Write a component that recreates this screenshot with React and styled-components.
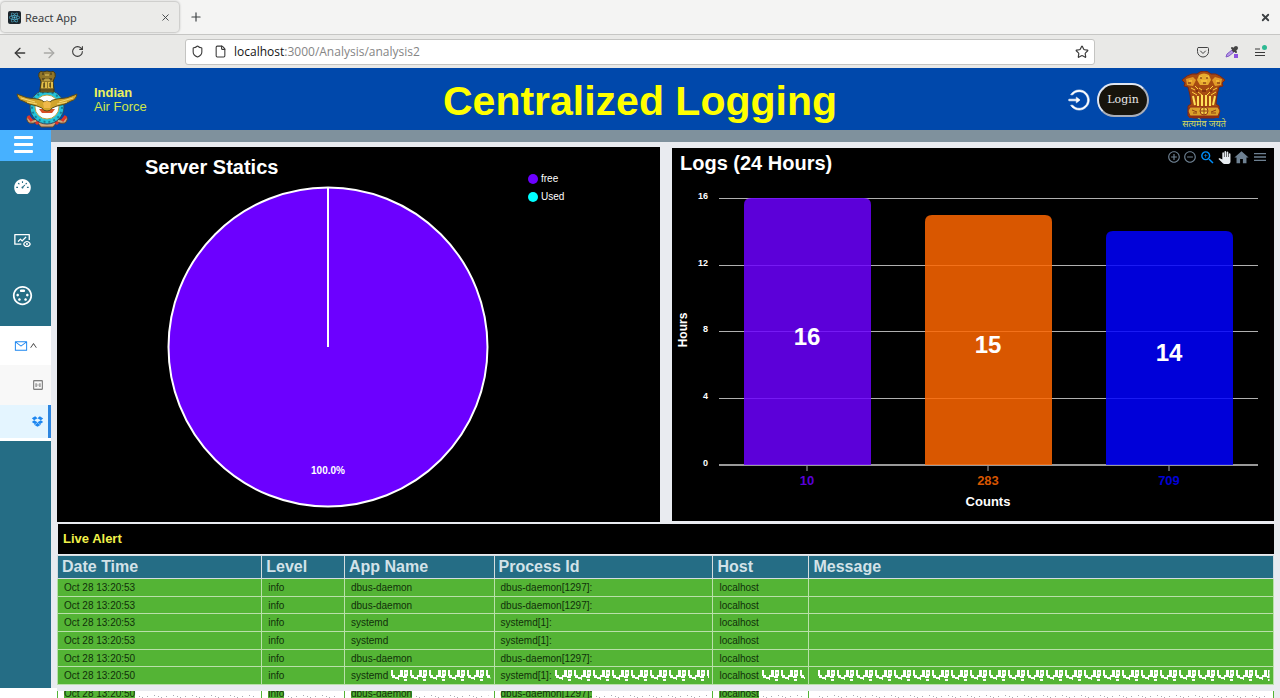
import React from "react";
import styled, { createGlobalStyle, css } from "styled-components";
import {
  ArrowLeft,
  ArrowRight,
  RotateCw,
  Shield,
  File,
  Star,
  X,
  Plus,
} from "lucide-react";
import { FaReact } from "react-icons/fa";
import {
  AiFillDashboard,
  AiOutlineFundView,
  AiOutlineMail,
  AiOutlineUp,
  AiOutlineOneToOne,
  AiOutlineDropbox,
  AiOutlineLogin,
} from "react-icons/ai";
import {
  MdOutlineSettingsInputSvideo,
  MdAddCircleOutline,
  MdRemoveCircleOutline,
  MdZoomIn,
  MdPanTool,
  MdHome,
  MdMenu,
} from "react-icons/md";

const GlobalStyle = createGlobalStyle`
  * { box-sizing: border-box; }
  body {
    margin: 0;
    overflow: hidden;
    background: #e9ebf0;
    font-family: "Liberation Sans", Arial, sans-serif;
  }
  button { border: 0; padding: 0; background: none; font: inherit; color: inherit; cursor: pointer; }
  h1, h2, ul { margin: 0; padding: 0; list-style: none; }
  a { color: inherit; text-decoration: none; }
  svg { display: block; flex: none; }
`;

const Screen = styled.div`
  display: flex;
  flex-direction: column;
  height: 100vh;
  overflow: hidden;
`;

/* Browser window */
const TabBar = styled.div`
  flex: none;
  display: flex;
  align-items: center;
  height: 35px;
  padding: 0 9px 0 1px;
  background: #f4f4f3;
  border-bottom: 1px solid #c6c6c4;
  font-family: "Noto Sans", sans-serif;
  font-size: 11px;
  color: #3c4043;
`;

const Tab = styled.div`
  display: flex;
  align-items: center;
  gap: 4px;
  width: 178px;
  height: 30px;
  padding: 0 8px 0 7px;
  margin-right: 10px;
  background: #ebebe9;
  border-radius: 4px;
  box-shadow: 0 0 2px 1px #c2c2c0;
`;

const TabTitle = styled.span`
  flex: 1;
`;

const Favicon = styled.span`
  display: grid;
  place-items: center;
  width: 13px;
  height: 13px;
  border-radius: 2px;
  background: #1c252c;
  color: #5ac8e8;
`;

const Push = styled.span`
  flex: 1;
`;

const NavBar = styled.div`
  flex: none;
  display: flex;
  align-items: center;
  height: 33px;
  padding: 0 12px;
  background: #e9e9e7;
  color: #3a3a3a;
`;

const NavButton = styled.button`
  display: grid;
  place-items: center;
  width: 14px;
  height: 14px;
  color: ${(p) => (p.$faded ? "#a9a9a7" : "inherit")};
`;

const NavGroup = styled.div`
  display: flex;
  gap: 15px;
`;

const AddressBar = styled.div`
  display: flex;
  align-items: center;
  gap: 10px;
  flex: 1;
  height: 26px;
  margin: 0 101px;
  padding: 0 5px;
  background: #fff;
  border: 1px solid #c4c4c2;
  border-radius: 3px;
  font: 12px "Open Sans", sans-serif;
`;

const Address = styled.span`
  flex: 1;
  margin-left: -3px;
  color: #858585;
`;

const AddressHost = styled.span`
  color: #141414;
`;

/* Site banner */
const Banner = styled.header`
  flex: none;
  display: grid;
  grid-template-columns: 1fr auto 1fr;
  align-items: center;
  height: 62px;
  background: #0048ab;
`;

const Brand = styled.div`
  display: flex;
  align-items: center;
  gap: 16px;
  padding-left: 16px;
  font-size: 13px;
  line-height: 14px;
  color: #cfe64a;
`;

const BrandName = styled.div`
  color: ${(p) => (p.$strong ? "#ecf05c" : "inherit")};
  font-weight: ${(p) => (p.$strong ? 700 : 400)};
`;

const Title = styled.h1`
  padding-top: 2px;
  font-size: 41px;
  line-height: 46px;
  color: #ffff00;
`;

const Account = styled.div`
  display: flex;
  align-items: center;
  justify-content: flex-end;
  padding-right: 53px;
  color: #fff;
`;

const LoginIcon = styled(AiOutlineLogin)`
  stroke: currentColor;
  stroke-width: 24px;
`;

const LoginButton = styled.button`
  width: 52px;
  height: 34px;
  margin: 0 32px 0 6px;
  border: 2px solid #a9aeb8;
  border-top-color: #dfe6f2;
  border-left-color: #dfe6f2;
  border-radius: 17px;
  background: #17140c;
  font: 11px "DejaVu Serif", serif;
  color: #e8e8e8;
`;

const Emblem = styled.div`
  display: grid;
  justify-items: center;
  padding-top: 3px;
`;

const Motto = styled.div`
  font: 9px/12px "Noto Sans Devanagari", "Noto Sans", sans-serif;
  color: #d8dc5a;
  white-space: nowrap;
`;

/* Side menu */
const Body = styled.div`
  flex: 1;
  min-height: 0;
  display: flex;
`;

const Sidebar = styled.nav`
  flex: none;
  display: flex;
  flex-direction: column;
  width: 51px;
  background: #256d85;
  color: #fff;
`;

const MenuToggle = styled.button`
  display: grid;
  align-content: center;
  gap: 4px;
  height: 31px;
  padding: 0 18px 2px 14px;
  background: #47b1ff;
`;

const Bar = styled.span`
  height: 3px;
  border-radius: 1px;
  background: #fff;
`;

const SideLinks = styled.div`
  display: flex;
  flex-direction: column;
  align-items: center;
  gap: 35px;
  height: 165px;
  padding: 16px 7px 0 0;
`;

const SubMenu = styled.div`
  padding-bottom: 3px;
  background: #fff;
`;

const subItem = css`
  display: flex;
  align-items: center;
  width: 100%;
`;

const SubHeading = styled.button`
  ${subItem}
  height: 39px;
  padding-left: 14px;
  gap: 1px;
  color: #1d86f0;
`;

const SubLink = styled.a`
  ${subItem}
  justify-content: flex-end;
  height: ${(p) => (p.$active ? "33px" : "40px")};
  padding-right: ${(p) => (p.$active ? "4px" : "7px")};
  background: ${(p) => (p.$active ? "#e4f5ff" : "#f8f8f8")};
  color: ${(p) => (p.$active ? "#1d86f0" : "#555")};
  border-right: ${(p) => (p.$active ? "3px solid #2d86e0" : "0")};
`;

const SidebarEdge = styled.div`
  height: 10px;
  margin: auto -6px 0 0;
  background: #fff;
`;

/* Content */
const Content = styled.main`
  flex: 1;
  min-width: 0;
`;

const Strip = styled.div`
  height: 12px;
  background: #7f919d;
`;

const Dashboard = styled.div`
  padding: 5px 6px 0;
`;

const Charts = styled.div`
  display: grid;
  grid-template-columns: 603fr 602fr;
  gap: 12px;
`;

const Panel = styled.section`
  display: ${(p) => (p.$row ? "flex" : "block")};
  margin: ${(p) => (p.$row ? "0" : "1px 0")};
  background: #000;
  color: #fff;
`;

const PanelTitle = styled.h2`
  font-size: 20px;
  line-height: 24px;
`;

const PieArea = styled.div`
  padding: 8px 0 14px 88px;
  svg { margin: 7px 0 0 22px; }
`;

const Legend = styled.ul`
  padding: 23px 0 0 39px;
  font-size: 10px;
  line-height: 18px;
`;

const LegendItem = styled.li`
  display: flex;
  align-items: center;
  gap: 3px;
  &::before {
    content: "";
    width: 10px;
    height: 10px;
    border-radius: 50%;
    background: ${(p) => p.$color};
  }
`;

const PanelHeader = styled.div`
  display: flex;
  justify-content: space-between;
  height: 30px;
  padding: 3px 6px 0 8px;
`;

const Tools = styled.div`
  display: flex;
  align-items: center;
  gap: 2px;
  height: 12px;
  color: #6e8192;
`;

const Tool = styled.button`
  color: ${(p) => p.$color || "inherit"};
`;

const ChartSvg = styled.svg`
  width: 100%;
  height: auto;
  font-family: "Liberation Sans", Arial, sans-serif;
  font-weight: 700;
`;

const AlertTitle = styled.h2`
  margin: 2px 0 1px 1px;
  padding-left: 5px;
  background: #000;
  font-size: 13px;
  line-height: 30px;
  color: #f0f04a;
`;

const LogTable = styled.table`
  width: 100%;
  border-collapse: collapse;
  table-layout: fixed;
`;

const HeadCell = styled.th`
  height: 23px;
  padding: 0 4px;
  background: #256d85;
  border: 1px solid #d5dde0;
  font-size: 16px;
  line-height: 20px;
  text-align: left;
  color: #d3e2e8;
`;

const LogRow = styled.tr`
  height: 18px;
  &:nth-child(3n + 2) { height: 17px; }
`;

const Cell = styled.td`
  position: relative;
  padding: 0 0 0 6px;
  background: #54b435;
  border: 1px solid #b9e0aa;
  font-size: 10px;
  line-height: 15px;
  color: #10300a;

  ${(p) =>
    p.$clipped &&
    css`
      background: #fff;
      border-color: #54b435;
      padding-right: 2px;
      &::before {
        content: "";
        position: absolute;
        inset: 0 -1px auto;
        height: 6px;
        background: #e9ebf0;
      }
    `}
`;

const CellLine = styled.span`
  display: flex;
  align-items: center;
`;

const CellText = styled.span`
  background: #54b435;
`;

const Texture = styled.svg`
  flex: 1;
  min-width: 0;
  width: 0;
  height: ${(p) => (p.$faint ? 14 : 12)}px;
  margin: 0 3px 0 2px;
`;

function Speckle({ id }) {
  return (
    <Texture aria-hidden="true">
      <pattern id={id} width="19" height="12" patternUnits="userSpaceOnUse">
        <path
          d="M1 0h2v5h2v3H2V6H1zM5 7h3v2H5zM8 5h2V0h3v7H9v3H8zM14 0h4v6h-1v2h-4V6h1zM14 9h3v2h-3z"
          fill="#fff"
        />
        <path d="M15 2h2v2h-2z" fill="#b7ddaa" />
      </pattern>
      <rect width="100%" height="12" fill={`url(#${id})`} />
    </Texture>
  );
}

function Dots({ id }) {
  return (
    <Texture $faint aria-hidden="true">
      <pattern id={id} width="19" height="14" patternUnits="userSpaceOnUse">
        <path
          d="M2 9h1v1H2zM7 12h1v1H7zM10 9h1v1h-1zM13 11h1v1h-1zM17 8h1v1h-1zM5 10h1v1H5z"
          fill="#a9a9b2"
        />
      </pattern>
      <rect width="100%" height="14" fill={`url(#${id})`} />
    </Texture>
  );
}

function AirForceCrest() {
  return (
    <svg width="62" height="60" viewBox="0 0 62 60" role="img" aria-label="Indian Air Force crest">
      <path
        d="M12 46q-3 3 1 7 4 1 8-1l4 5h12l4-5q4 2 8 1 4-4 1-7l-4 4-7-1H23l-7 1z"
        fill="#cfa77c"
        stroke="#61442b"
      />
      <path d="M12 46l4 5M50 46l-4 5M20 54l3-3M42 54l-3-3" stroke="#e0342a" strokeWidth="3" />
      <circle cx="31" cy="37" r="17" fill="#25c3d8" stroke="#35435b" />
      <circle cx="31" cy="37" r="15" fill="none" stroke="#16809a" strokeWidth="2" strokeDasharray="2 3" />
      <circle cx="31" cy="37" r="12" fill="#fff" stroke="#b8a344" />
      <path d="M23 39h16l-3 4H26z" fill="#d94f24" />
      <path
        d="M1 24q10 5 20 5 6 1 7 3l3-1 3 1q1-2 7-3 10 0 20-5-1 6-6 7l-6 3-8 2-5 2q-1 3-5 3t-5-3l-5-2-8-2-6-3q-5-1-6-7z"
        fill="#d2a52c"
        stroke="#5c4c17"
      />
      <path d="M5 28l14 4M57 28l-14 4M11 32l10 2M51 32l-10 2" stroke="#f4d774" />
      <path d="M27 33q4-4 8 0l-1 5h-6z" fill="#f0b94a" />
      <path
        d="M23 3q2-3 4-1 4-2 8 0 2-2 4 1 1 4-1 6l-1 3 1 7v3H24v-3l1-7-1-3q-2-2-1-6z"
        fill="#907528"
        stroke="#433814"
      />
      <path d="M27 12l-1 6M30 12v6M33 12v6M36 12v6" stroke="#e0bd48" strokeWidth="2" />
      <path d="M24 20h14M26 4h2M34 4h2M26 9h3M33 9h3M28 13v4M34 13v4" stroke="#332c16" />
      <path d="M29 5h4M28 10h6" stroke="#e7ca62" />
    </svg>
  );
}

function LionCapital() {
  return (
    <svg width="46" height="48" viewBox="0 0 46 48" role="img" aria-label="State emblem">
      <path
        d="M16 3q3-3 7-3t7 3q5-1 9 2l5 4-3 3 1 3-4 1-2 8-1 9 3 2v10l-5 2H12l-5-2V35l3-2-1-9-2-8-4-1 1-3-3-3 5-4q5-3 10-2z"
        fill="#a64b12"
        stroke="#7d2612"
      />
      <path d="M18 4q5-3 10 0l2 5-3 5h-8l-3-5z" fill="#e8ac30" />
      <path d="M5 8l7-2 3 3-3 6-6-1M41 8l-7-2-3 3 3 6 6-1" fill="#e39a28" />
      <path
        d="M10 17l4 2M14 15l3 3M18 17l3 2M25 19l3-2M29 18l3-3M32 19l4-2M11 21l5 3M17 21l4 3M26 24l3-3M30 24l5-3M18 6h3M25 6h3M20 10h6M8 10h3M35 10h3"
        stroke="#ffd040"
      />
      <path d="M12 25l2 9M17 25v10M21 24v11M25 24v11M29 25v10M34 25l-2 9" stroke="#ffe25a" strokeWidth="2" />
      <path d="M9 36h28l2 4-2 5H9l-2-5z" fill="#dba12a" stroke="#8d2c14" />
      <circle cx="23" cy="40" r="4" fill="#f3cf49" stroke="#963817" />
      <path d="M23 36v8M19 40h8M11 39l5 2M12 42h4M30 41l5-2M30 42h5" stroke="#8c3e13" />
      <path d="M8 46h30" stroke="#8d2c14" strokeWidth="2" />
      <path d="M19 7h2M25 7h2M22 12h3M15 20h2M29 20h2M21 20h4M7 12h3M36 12h3" stroke="#641b0d" />
    </svg>
  );
}

const bars = [
  { label: "10", value: 16, color: "#6c00ff", x: 72 },
  { label: "283", value: 15, color: "#ff6600", x: 253 },
  { label: "709", value: 14, color: "#0000ff", x: 434 },
];
const BASE = 287;
const TOP = 20;
const yOf = (v) => BASE - Math.round(((BASE - TOP) * v) / 16);

function BarChart() {
  return (
    <ChartSvg viewBox="0 0 602 343" role="img" aria-label="Logs per count">
      {[16, 12, 8, 4, 0].map((v) => (
        <g key={v}>
          <line
            x1="47"
            x2="586"
            y1={yOf(v)}
            y2={yOf(v)}
            stroke={v ? "#b0b0b0" : "#999"}
            strokeWidth={v ? 1 : 2}
            shapeRendering="crispEdges"
          />
          <text x="36" y={yOf(v) + 1} fontSize="9" fill="#fff" textAnchor="end">
            {v}
          </text>
        </g>
      ))}
      {bars.map((b) => {
        const top = yOf(b.value);
        const mid = b.x + 63;
        return (
          <g key={b.label}>
            <path
              d={`M${b.x} ${BASE}V${top + 7}q0-7 7-7h113q7 0 7 7V${BASE}z`}
              fill={b.color}
              fillOpacity="0.85"
            />
            <text x={mid} y={(BASE + top) / 2 + 13} fontSize="24" fill="#fff" textAnchor="middle">
              {b.value}
            </text>
            <path d={`M${mid} 288v5`} stroke="#aaa" />
            <text x={mid} y="307" fontSize="13" fill={b.color} fillOpacity="0.85" textAnchor="middle">
              {b.label}
            </text>
          </g>
        );
      })}
      <text x="316" y="328" fontSize="13" fill="#fff" textAnchor="middle">
        Counts
      </text>
      <text transform="translate(15 152) rotate(-90)" fontSize="12" fill="#fff" textAnchor="middle">
        Hours
      </text>
    </ChartSvg>
  );
}

function PieChart() {
  return (
    <svg width="322" height="322" viewBox="0 0 322 322" role="img" aria-label="Free 100%">
      <circle cx="161" cy="161" r="159.500" fill="#6c00ff" stroke="#fff" strokeWidth="2" />
      <path d="M161 2v159" stroke="#fff" strokeWidth="2" />
      <text
        x="161"
        y="288"
        fontFamily="Liberation Sans, Arial, sans-serif"
        fontSize="10"
        fontWeight="700"
        fill="#fff"
        textAnchor="middle"
      >
        100.0%
      </text>
    </svg>
  );
}

const columns = [
  ["Date Time", "16.8%"],
  ["Level", "6.8%"],
  ["App Name", "12.3%"],
  ["Process Id", "18%"],
  ["Host", "7.9%"],
  ["Message", "auto"],
];

const dbus = ["info", "dbus-daemon", "dbus-daemon[1297]:", "localhost", ""];
const systemd = ["info", "systemd", "systemd[1]:", "localhost", ""];
const logs = [
  ["Oct 28 13:20:53", ...dbus],
  ["Oct 28 13:20:53", ...dbus],
  ["Oct 28 13:20:53", ...systemd],
  ["Oct 28 13:20:53", ...systemd],
  ["Oct 28 13:20:50", ...dbus],
  ["Oct 28 13:20:50", ...systemd],
  ["Oct 28 13:20:50", ...dbus],
];

function LogBody() {
  return (
    <tbody>
      {logs.map((row, r) => (
        <LogRow key={r}>
          {row.map((text, c) => (
            <Cell key={c} $clipped={r === 6}>
              <CellLine>
                {text && <CellText>{text}</CellText>}
                {r === 5 && c > 1 && <Speckle id={`speckle${c}`} />}
                {r === 6 && <Dots id={`dots${c}`} />}
              </CellLine>
            </Cell>
          ))}
        </LogRow>
      ))}
    </tbody>
  );
}

export default function App() {
  return (
    <Screen>
      <GlobalStyle />
      <TabBar>
        <Tab>
          <Favicon>
            <FaReact size={11} />
          </Favicon>
          <TabTitle>React App</TabTitle>
          <button aria-label="Close tab">
            <X size={11} strokeWidth={2} />
          </button>
        </Tab>
        <button aria-label="New tab">
          <Plus size={14} strokeWidth={2} />
        </button>
        <Push />
        <button aria-label="Close window">
          <X size={11} strokeWidth={4} />
        </button>
      </TabBar>
      <NavBar>
        <NavGroup>
          <NavButton aria-label="Back">
            <ArrowLeft size={16} strokeWidth={2} />
          </NavButton>
          <NavButton aria-label="Forward" $faded>
            <ArrowRight size={16} strokeWidth={2} />
          </NavButton>
          <NavButton aria-label="Reload">
            <RotateCw size={13} strokeWidth={2} />
          </NavButton>
        </NavGroup>
        <AddressBar>
          <Shield size={13} strokeWidth={2} />
          <File size={13} strokeWidth={2} />
          <Address>
            <AddressHost>localhost</AddressHost>:3000/Analysis/analysis2
          </Address>
          <Star size={14} strokeWidth={2} />
        </AddressBar>
        <NavGroup>
          <NavButton aria-label="Save to Pocket">
            <svg width="12" height="12" viewBox="0 0 12 12" fill="none" stroke="#444" strokeLinecap="round">
              <path d="M1.500 1.500h9q1 0 1 1V5.500a5.500 5.500 0 0 1-11 0v-3q0-1 1-1z" />
              <path d="M3.500 5l2.500 2.500L8.500 5" />
            </svg>
          </NavButton>
          <NavButton aria-label="Color picker">
            <svg width="14" height="14" viewBox="0 0 14 14">
              <path d="M1 12l1-3 5-4 2 2-5 4z" fill="#b79be8" stroke="#8158c4" />
              <path d="M7 3l4 4" stroke="#444" strokeWidth="2" strokeLinecap="round" />
              <path d="M9 5l2-2" stroke="#444" strokeWidth="4" strokeLinecap="round" />
              <path d="M9 9h4v4H9z" fill="#8d52e0" />
            </svg>
          </NavButton>
          <NavButton aria-label="Menu">
            <svg width="14" height="14" viewBox="0 0 14 14">
              <path d="M1 4h5M1 7.500h10M1 10.500h10" stroke="#3a3a3a" strokeWidth="1" />
              <circle cx="10.500" cy="2.500" r="2.500" fill="#2db992" />
            </svg>
          </NavButton>
        </NavGroup>
      </NavBar>
      <Banner>
        <Brand>
          <AirForceCrest />
          <div>
            <BrandName $strong>Indian</BrandName>
            <BrandName>Air Force</BrandName>
          </div>
        </Brand>
        <Title>Centralized Logging</Title>
        <Account>
          <LoginIcon size={24} />
          <LoginButton>Login</LoginButton>
          <Emblem>
            <LionCapital />
            <Motto lang="hi">सत्यमेव जयते</Motto>
          </Emblem>
        </Account>
      </Banner>
      <Body>
        <Sidebar>
          <MenuToggle aria-label="Toggle menu">
            <Bar />
            <Bar />
            <Bar />
          </MenuToggle>
          <SideLinks>
            <a href="#dashboard" aria-label="Dashboard">
              <AiFillDashboard size={19} />
            </a>
            <a href="#monitor" aria-label="Monitor">
              <AiOutlineFundView size={19} />
            </a>
            <a href="#inputs" aria-label="Inputs">
              <MdOutlineSettingsInputSvideo size={21} />
            </a>
          </SideLinks>
          <SubMenu>
            <SubHeading aria-label="Analysis">
              <AiOutlineMail size={14} />
              <AiOutlineUp size={9} color="#333" />
            </SubHeading>
            <SubLink href="#analysis1" aria-label="Analysis 1">
              <AiOutlineOneToOne size={12} />
            </SubLink>
            <SubLink href="#analysis2" aria-label="Analysis 2" $active>
              <AiOutlineDropbox size={13} />
            </SubLink>
          </SubMenu>
          <SidebarEdge />
        </Sidebar>
        <Content>
          <Strip />
          <Dashboard>
            <Charts>
              <Panel $row>
                <PieArea>
                  <PanelTitle>Server Statics</PanelTitle>
                  <PieChart />
                </PieArea>
                <Legend>
                  <LegendItem $color="#6c00ff">free</LegendItem>
                  <LegendItem $color="#00ffff">Used</LegendItem>
                </Legend>
              </Panel>
              <Panel>
                <PanelHeader>
                  <PanelTitle>Logs (24 Hours)</PanelTitle>
                  <Tools>
                    <Tool aria-label="Zoom in">
                      <MdAddCircleOutline size={14} />
                    </Tool>
                    <Tool aria-label="Zoom out">
                      <MdRemoveCircleOutline size={14} />
                    </Tool>
                    <Tool aria-label="Selection zoom" $color="#008ffb">
                      <MdZoomIn size={17} />
                    </Tool>
                    <Tool aria-label="Pan" $color="#e8edf2">
                      <MdPanTool size={13} />
                    </Tool>
                    <Tool aria-label="Reset zoom">
                      <MdHome size={17} />
                    </Tool>
                    <Tool aria-label="Chart menu">
                      <MdMenu size={16} />
                    </Tool>
                  </Tools>
                </PanelHeader>
                <BarChart />
              </Panel>
            </Charts>
            <AlertTitle>Live Alert</AlertTitle>
            <LogTable>
              <colgroup>
                {columns.map(([name, width]) => (
                  <col key={name} width={width === "auto" ? undefined : width} />
                ))}
              </colgroup>
              <thead>
                <tr>
                  {columns.map(([name]) => (
                    <HeadCell key={name}>{name}</HeadCell>
                  ))}
                </tr>
              </thead>
              <LogBody />
            </LogTable>
          </Dashboard>
        </Content>
      </Body>
    </Screen>
  );
}
